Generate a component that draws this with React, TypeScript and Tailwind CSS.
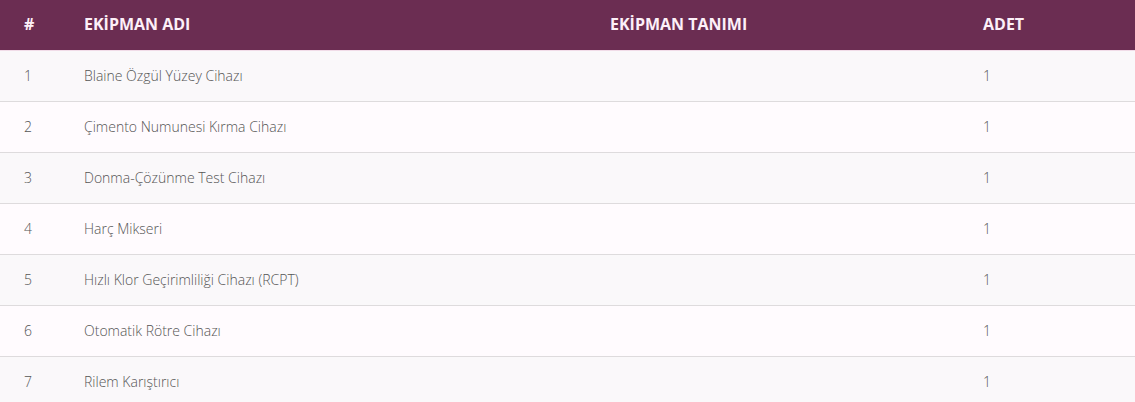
const rows = [
  { no: 1, name: 'Blaine Özgül Yüzey Cihazı', desc: '', qty: 1 },
  { no: 2, name: 'Çimento Numunesi Kırma Cihazı', desc: '', qty: 1 },
  { no: 3, name: 'Donma-Çözünme Test Cihazı', desc: '', qty: 1 },
  { no: 4, name: 'Harç Mikseri', desc: '', qty: 1 },
  { no: 5, name: 'Hızlı Klor Geçirimliliği Cihazı (RCPT)', desc: '', qty: 1 },
  { no: 6, name: 'Otomatik Rötre Cihazı', desc: '', qty: 1 },
  { no: 7, name: 'Rilem Karıştırıcı', desc: '', qty: 1 },
];

const App = () => {
  return (
    <div className="min-h-screen bg-white font-['Open_Sans',sans-serif]">
      <table className="w-full table-fixed border-collapse text-left">
        <colgroup>
          <col className="w-[60px]" />
          <col className="w-[526px]" />
          <col className="w-[373px]" />
          <col />
        </colgroup>
        <thead>
          <tr className="h-[50px] bg-[#6b2d52] text-[16px] font-bold text-[#fdf0f8] border-b border-[#f1dce8]">
            <th className="pl-6 pb-[2px] font-bold">#</th>
            <th className="pl-6 pb-[2px] font-bold">EKİPMAN ADI</th>
            <th className="pl-6 pb-[2px] font-bold">EKİPMAN TANIMI</th>
            <th className="pl-6 pb-[2px] font-bold">ADET</th>
          </tr>
        </thead>
        <tbody>
          {rows.map((row, i) => (
            <tr
              key={row.no}
              className={`h-[51px] border-b border-[#dedbdd] text-[14px] font-light text-[#555] ${
                i % 2 === 0 ? 'bg-[#faf8fa]' : 'bg-[#fffbfe]'
              }`}
            >
              <td className="pl-6">{row.no}</td>
              <td className="pl-6">{row.name}</td>
              <td className="pl-6">{row.desc}</td>
              <td className="pl-6">{row.qty}</td>
            </tr>
          ))}
        </tbody>
      </table>
    </div>
  );
};

export default App;
